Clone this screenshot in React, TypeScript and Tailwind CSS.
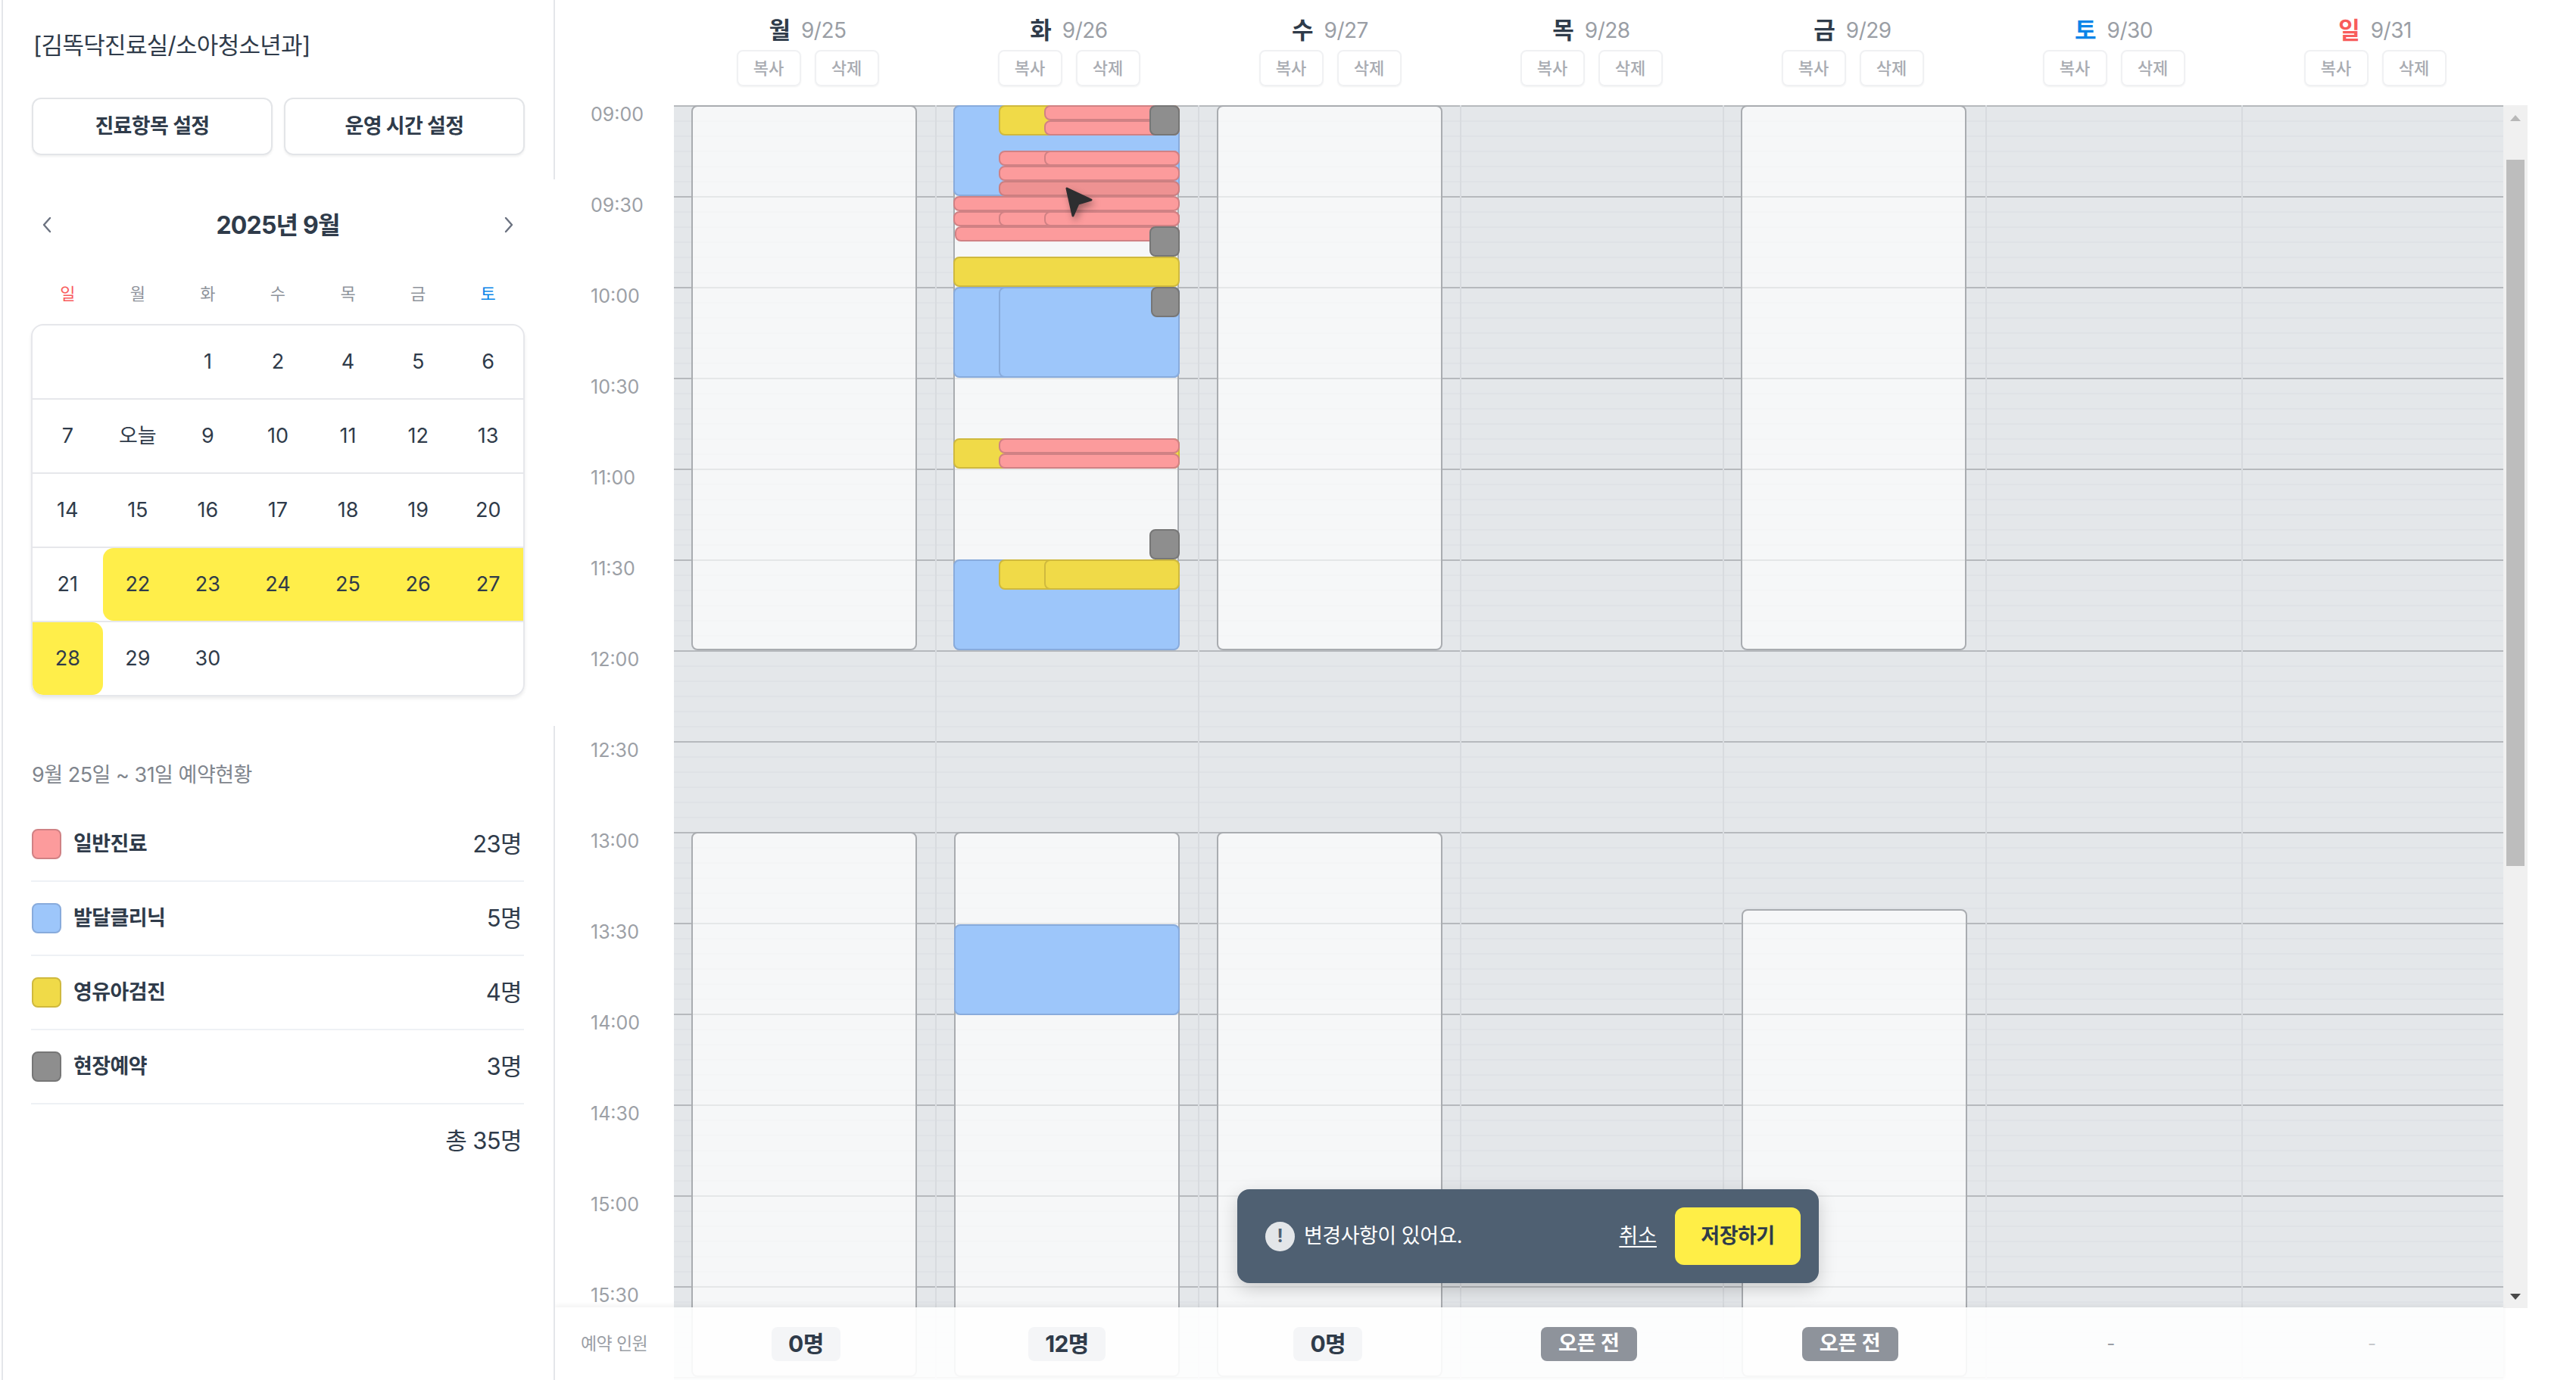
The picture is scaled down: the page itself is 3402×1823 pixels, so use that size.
const weekLabels = [
  { name: "일", color: "text-[#f85c5c]" },
  { name: "월", color: "text-[#8e939b]" },
  { name: "화", color: "text-[#8e939b]" },
  { name: "수", color: "text-[#8e939b]" },
  { name: "목", color: "text-[#8e939b]" },
  { name: "금", color: "text-[#8e939b]" },
  { name: "토", color: "text-[#0a84e8]" },
]

const calendarRows = [
  ["", "", "1", "2", "4", "5", "6"],
  ["7", "오늘", "9", "10", "11", "12", "13"],
  ["14", "15", "16", "17", "18", "19", "20"],
  ["21", "22", "23", "24", "25", "26", "27"],
  ["28", "29", "30", "", "", "", ""],
]

const stats = [
  { label: "일반진료", count: "23명", swatch: "bg-[#fc9b9c] border-[#d08184]" },
  { label: "발달클리닉", count: "5명", swatch: "bg-[#9dc6fa] border-[#88abdc]" },
  { label: "영유아검진", count: "4명", swatch: "bg-[#f0da48] border-[#cfb93e]" },
  { label: "현장예약", count: "3명", swatch: "bg-[#8e8e8e] border-[#767676]" },
]

const days = [
  { name: "월", date: "9/25", color: "text-[#2f3b4a]" },
  { name: "화", date: "9/26", color: "text-[#2f3b4a]" },
  { name: "수", date: "9/27", color: "text-[#2f3b4a]" },
  { name: "목", date: "9/28", color: "text-[#2f3b4a]" },
  { name: "금", date: "9/29", color: "text-[#2f3b4a]" },
  { name: "토", date: "9/30", color: "text-[#0a84e8]" },
  { name: "일", date: "9/31", color: "text-[#f85c5c]" },
]

// column widths of the time grid, the screen isn't perfectly even
const columns = [
  { width: 345, boxes: [{ left: 23, from: 0, to: 36 }, { left: 23, from: 48, to: 84 }] },
  { width: 347, boxes: [{ left: 24, from: 0, to: 36 }, { left: 25, from: 48, to: 84 }] },
  { width: 346, boxes: [{ left: 25, from: 0, to: 36 }, { left: 25, from: 48, to: 84 }] },
  { width: 347, boxes: [] },
  { width: 347, boxes: [{ left: 24, from: 0, to: 36 }, { left: 25, from: 53.1, to: 84 }] },
  { width: 338, boxes: [] },
  { width: 346, boxes: [] },
]

const eventStyle = {
  pink: "bg-[#fc9b9c] border-[#d08184]",
  hover: "bg-[#ee9292] border-[#cc7f80]",
  blue: "bg-[#9dc6fa] border-[#88abdc]",
  yellow: "bg-[#f0da48] border-[#cfb93e]",
  gray: "bg-[#8e8e8e] border-[#767676]",
}

type EventKind = keyof typeof eventStyle
type TueEvent = [EventKind, number, number, number, number]

// kind, left, width, start row, row count (one row = 20px)
const tuesdayEvents: TueEvent[] = [
  ["blue", 24, 299, 0, 6],
  ["yellow", 84, 239, 0, 2],
  ["pink", 144, 179, 0, 1],
  ["pink", 144, 179, 1, 1],
  ["gray", 283, 40, 0, 2],
  ["pink", 84, 239, 3, 1],
  ["pink", 144, 179, 3, 1],
  ["pink", 84, 239, 4, 1],
  ["hover", 84, 239, 5, 1],
  ["pink", 24, 299, 6, 1],
  ["pink", 24, 299, 7, 1],
  ["pink", 84, 239, 7, 1],
  ["pink", 144, 179, 7, 1],
  ["pink", 26, 297, 8, 1],
  ["gray", 283, 40, 8, 2],
  ["yellow", 24, 299, 10, 2],
  ["blue", 24, 299, 12, 6],
  ["blue", 84, 239, 12, 6],
  ["gray", 285, 38, 12, 2],
  ["yellow", 24, 299, 22, 2],
  ["pink", 84, 239, 22, 1],
  ["pink", 84, 239, 23, 1],
  ["gray", 283, 40, 28, 2],
  ["blue", 24, 299, 30, 6],
  ["yellow", 84, 239, 30, 2],
  ["yellow", 144, 179, 30, 2],
  ["blue", 25, 298, 54.1, 6],
]

const times = [
  "09:00", "09:30", "10:00", "10:30", "11:00", "11:30", "12:00",
  "12:30", "13:00", "13:30", "14:00", "14:30", "15:00", "15:30",
]

const Sidebar = () => (
  <div className="w-[731px] ml-[2px] h-full border-l-2 border-[#e4e6ea] flex flex-col shrink-0">
    <div className="h-[237px] pl-[37px] border-r-2 border-[#e4e6ea]">
      <div className="h-[120px] flex items-center pl-[3px] text-[31px] text-[#2f3b4a] tracking-[-0.7px]">
        [김똑닥진료실/소아청소년과]
      </div>
      <div className="mt-[9px] flex gap-[15px] pl-[1px]">
        <button className="w-[318px] h-[76px] rounded-[12px] border-2 border-[#e3e5e8] shadow-[0_2px_3px_rgba(0,0,0,0.06)] text-[27px] font-bold text-[#2f3b4a] tracking-[-0.6px]">
          진료항목 설정
        </button>
        <button className="w-[318px] h-[76px] rounded-[12px] border-2 border-[#e3e5e8] shadow-[0_2px_3px_rgba(0,0,0,0.06)] text-[27px] font-bold text-[#2f3b4a] tracking-[-0.6px]">
          운영 시간 설정
        </button>
      </div>
    </div>

    <div className="h-[722px] pl-[37px]">
      <div className="h-[120px] w-[652px] flex items-center justify-between px-[10px]">
        <svg width="24" height="24" viewBox="0 0 24 24" fill="none" stroke="#6b7280" strokeWidth="2.4" strokeLinecap="round" strokeLinejoin="round">
          <path d="M15 3 L7 12 L15 21" />
        </svg>
        <span className="mt-[1px] text-[32px] font-bold text-[#2f3b4a] tracking-[-0.8px]">2025년 9월</span>
        <svg width="24" height="24" viewBox="0 0 24 24" fill="none" stroke="#6b7280" strokeWidth="2.4" strokeLinecap="round" strokeLinejoin="round">
          <path d="M9 3 L17 12 L9 21" />
        </svg>
      </div>
      <div className="w-[652px] h-[62px] px-[2px] grid grid-cols-7 items-center text-center text-[22px]">
        {weekLabels.map(w => (
          <span key={w.name} className={w.color}>{w.name}</span>
        ))}
      </div>
      <div className="mt-[9px] w-[652px] rounded-[16px] border-2 border-[#e6e7eb] shadow-[0_3px_4px_rgba(0,0,0,0.08)] overflow-hidden">
        {calendarRows.map((row, r) => (
          <div key={r} className={`grid grid-cols-7 ${r > 0 ? "h-[98px] border-t-2 border-[#e6e7eb]" : "h-[96px]"}`}>
            {row.map((d, c) => {
              const yellow = (r === 3 && c > 0) || (r === 4 && c === 0)
              const corner = r === 3 && c === 1 ? "rounded-l-[14px]" : r === 4 && c === 0 ? "rounded-r-[14px] rounded-bl-[14px]" : ""
              return (
                <div
                  key={c}
                  className={`flex items-center justify-center text-[27px] text-[#2f3b4a] ${yellow ? "bg-[#ffee4a]" : ""} ${corner}`}
                >
                  {d}
                </div>
              )
            })}
          </div>
        ))}
      </div>
    </div>

    <div className="flex-1 pl-[37px] border-r-2 border-[#e4e6ea]">
      <div className="mt-[45px] h-[40px] flex items-center pl-[1px] text-[27px] text-[#7f858d] tracking-[-0.5px]">
        9월 25일 ~ 31일 예약현황
      </div>
      <div className="mt-[23px] w-[651px]">
        {stats.map(s => (
          <div key={s.label} className="h-[98px] border-b-2 border-[#eef1f5] flex items-center">
            <div className={`ml-[1px] w-[39px] h-[40px] rounded-[8px] border-2 ${s.swatch}`} />
            <span className="ml-[16px] text-[27px] font-bold text-[#2f3b4a] tracking-[-0.6px]">{s.label}</span>
            <span className="ml-auto mr-[3px] text-[31px] text-[#2f3b4a] tracking-[-0.6px]">{s.count}</span>
          </div>
        ))}
        <div className="h-[96px] flex items-center justify-end pr-[3px] text-[31px] text-[#2f3b4a] tracking-[-0.6px]">
          총 35명
        </div>
      </div>
    </div>
  </div>
)

const WeekHeader = () => (
  <div className="h-[139px] pl-[161px] flex shrink-0">
    {days.map(d => (
      <div key={d.date} className="w-[345px] flex flex-col items-center">
        <div className="mt-[20px] h-[40px] flex items-center gap-[14px]">
          <span className={`text-[31px] font-bold ${d.color}`}>{d.name}</span>
          <span className="text-[28px] text-[#9a9ea5] tracking-[-0.5px]">{d.date}</span>
        </div>
        <div className="mt-[6px] flex gap-[18px]">
          <button className="w-[85px] h-[48px] rounded-[8px] border-2 border-[#f0f1f3] shadow-[0_1px_2px_rgba(0,0,0,0.05)] text-[22px] font-medium text-[#a9acb2]">복사</button>
          <button className="w-[85px] h-[48px] rounded-[8px] border-2 border-[#f0f1f3] shadow-[0_1px_2px_rgba(0,0,0,0.05)] text-[22px] font-medium text-[#a9acb2]">삭제</button>
        </div>
      </div>
    ))}
  </div>
)

const TimeGrid = () => (
  <div className="w-[2416px] h-full flex bg-[#e4e7ea] bg-[image:repeating-linear-gradient(to_bottom,#b6b9bd_0,#b6b9bd_2px,transparent_2px,transparent_120px),repeating-linear-gradient(to_bottom,#dfe2e6_0,#dfe2e6_2px,transparent_2px,transparent_20px)]">
    {columns.map((col, i) => (
      <div
        key={i}
        className={`relative h-full shrink-0 ${i > 0 ? "border-l-2 border-[#d8dbdf]" : ""}`}
        style={{ width: col.width }}
      >
        {col.boxes.map(b => (
          <div
            key={b.from}
            className="absolute w-[298px] rounded-[8px] border-2 border-[#a9acb0] bg-white/65"
            style={{ left: b.left - (i > 0 ? 2 : 0), top: b.from * 20, height: (b.to - b.from) * 20 }}
          />
        ))}
        {i === 1 && tuesdayEvents.map(([kind, left, width, start, rows], n) => (
          <div
            key={n}
            className={`absolute rounded-[8px] border-2 ${eventStyle[kind]}`}
            style={{ left: left - 2, width, top: start * 20, height: rows * 20 }}
          />
        ))}
      </div>
    ))}
  </div>
)

const Scrollbar = () => (
  <div className="w-[32px] h-[1589px] bg-[#f0f0f0] flex flex-col items-center shrink-0">
    <svg className="mt-[12px] shrink-0" width="16" height="10" viewBox="0 0 16 10"><path d="M8 1 L15 9 L1 9 Z" fill="#b8b8b8" /></svg>
    <div className="mt-[50px] w-[24px] h-[933px] bg-[#bdbdbd]" />
    <svg className="mt-auto mb-[10px] shrink-0" width="16" height="10" viewBox="0 0 16 10"><path d="M1 1 L15 1 L8 9 Z" fill="#4a4a4a" /></svg>
  </div>
)

const SaveToast = () => (
  <div className="absolute left-[901px] top-[1571px] w-[768px] h-[124px] rounded-[16px] bg-[#4f6072] shadow-[0_8px_24px_rgba(0,0,0,0.18)] flex items-center pl-[37px] pr-[24px]">
    <div className="w-[39px] h-[39px] rounded-full bg-[#e3e6e9] flex items-center justify-center text-[24px] font-bold text-[#4f6072] leading-none">!</div>
    <span className="ml-[12px] text-[27px] text-white tracking-[-0.5px]">변경사항이 있어요.</span>
    <span className="ml-auto text-[27px] text-white underline underline-offset-4">취소</span>
    <button className="ml-[24px] w-[166px] h-[76px] rounded-[12px] bg-[#ffee47] text-[27px] font-bold text-[#2f3b4a] tracking-[-0.5px]">저장하기</button>
  </div>
)

const TotalsBar = () => (
  <div className="absolute left-0 bottom-0 w-[2573px] h-[96px] bg-white/90 shadow-[0_-3px_6px_rgba(0,0,0,0.05)] flex items-center">
    <div className="w-[157px] pl-[34px] text-[23px] text-[#9a9ea5] tracking-[-0.6px]">예약 인원</div>
    <div className="pl-[2px] flex items-center">
      {["0명", "12명", "0명"].map((t, i) => (
        <div key={i} className="w-[344.7px] flex justify-center">
          <span className="h-[45px] px-[22px] rounded-[8px] bg-[#f4f5f7] flex items-center text-[30px] font-bold text-[#2f3b4a] tracking-[-0.6px]">{t}</span>
        </div>
      ))}
      {[0, 1].map(i => (
        <div key={i} className="w-[344.7px] flex justify-center">
          <span className="h-[45px] w-[127px] rounded-[8px] bg-[#8e939b] flex items-center justify-center text-[27px] font-bold text-white">오픈 전</span>
        </div>
      ))}
      <div className="w-[344.7px] text-center text-[24px] text-[#9a9ea5]">-</div>
      <div className="w-[344.7px] text-center text-[24px] text-[#c6c8cc]">-</div>
    </div>
  </div>
)

export default function App() {
  return (
    <div className="w-[3402px] h-[1823px] overflow-hidden bg-white flex font-['Inter','Noto_Sans_CJK_KR',sans-serif]">
      <Sidebar />
      <div className="relative flex-1 flex flex-col overflow-hidden">
        <WeekHeader />
        <div className="flex-1 flex min-h-0">
          <div className="w-[157px] shrink-0">
            {times.map(t => (
              <div key={t} className="h-[120px] pt-[1px] pl-[47px] text-[25px] leading-[22px] text-[#9ca0a6]">{t}</div>
            ))}
          </div>
          <TimeGrid />
          <Scrollbar />
        </div>

        {/* mouse pointer from the capture */}
        <svg className="absolute left-[669px] top-[244px] drop-shadow-[3px_5px_5px_rgba(0,0,0,0.35)]" width="44" height="46" viewBox="0 0 44 46">
          <path d="M7 5 L39 20 L22 25 L15 41 Z" fill="#2d2e30" stroke="#2d2e30" strokeWidth="3" strokeLinejoin="round" />
        </svg>

        <TotalsBar />
        <SaveToast />
      </div>
    </div>
  )
}
